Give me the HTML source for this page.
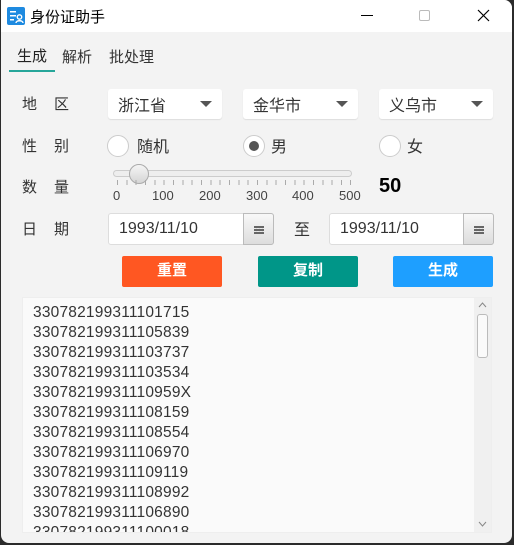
<!DOCTYPE html><html><head><meta charset="utf-8"><style>
*{margin:0;padding:0;box-sizing:border-box}
body{width:514px;height:545px;background:#2b2b2b;font-family:"Liberation Sans","Noto Sans CJK SC",sans-serif;position:relative;overflow:hidden;color:#333}
.win{position:absolute;left:1px;top:0;width:511px;height:543px;background:#f3f3f3;border-radius:0 8px 8px 8px;overflow:hidden}
.tb{position:absolute;left:0;top:0;width:100%;height:32px;background:#fff}
.a{position:absolute;white-space:nowrap}
.combo{position:absolute;top:89px;height:30px;background:#fff;border-radius:3px;box-shadow:0 1px 1px #ddd;font-size:16px;padding:3px 0 0 10px}
.combo:after{content:"";position:absolute;right:10px;top:12px;border-left:6px solid transparent;border-right:6px solid transparent;border-top:6px solid #555}
.lbl{position:absolute;left:21px;font-size:15px;letter-spacing:17px;color:#333}
.radio{position:absolute;width:22px;height:22px;border-radius:50%;background:#fff;border:1px solid #ccc;top:135px}
.rt{position:absolute;top:133px;font-size:16px}
.date{position:absolute;top:213px;height:32px;background:#fff;border:1px solid #ddd;border-radius:3px;font-size:16px;padding:6px 0 0 10px}
.cal{position:absolute;right:-1px;top:-1px;width:31px;height:32px;border:1px solid #bbb;border-radius:0 3px 3px 0;background:linear-gradient(#f8f8f8,#ddd)}
.cal i{position:absolute;left:10px;top:12px;width:10px;height:8px;background:linear-gradient(#666 0 2px,transparent 2px 3px,#666 3px 5px,transparent 5px 6px,#666 6px),repeating-linear-gradient(90deg,transparent 0 2px,#ddd 2px 3px);background-blend-mode:normal}
.cal b{position:absolute;left:10px;top:12px;width:10px;height:8px;background:repeating-linear-gradient(90deg,transparent 0 2px,#eee 2px 3px)}
.btn{position:absolute;top:256px;height:31px;width:100px;color:#fff;font-size:15px;font-weight:bold;text-align:center;line-height:29px;border-radius:2px}
.ta{position:absolute;left:21px;top:297px;width:470px;height:236px;background:#fafafa;border:1px solid #eee;overflow:hidden}
.ta div{font-size:15.5px;line-height:20px;color:#333;padding-left:10px;padding-top:5px;letter-spacing:0.2px}
</style></head><body><div class="win">
<div class="tb">
<svg class="a" style="left:6px;top:7px" width="18" height="18"><rect width="18" height="18" rx="2" fill="#1e8ae0"/><rect x="3" y="4" width="6" height="1.5" fill="#fff"/><rect x="3" y="8" width="6" height="1.5" fill="#fff"/><rect x="3" y="12" width="4" height="1.5" fill="#fff"/><circle cx="12.5" cy="10" r="2.2" fill="none" stroke="#fff" stroke-width="1.4"/><path d="M9 16c0-3 7-3 7 0" fill="none" stroke="#fff" stroke-width="1.4"/></svg>
<div class="a" style="left:29px;top:6px;font-size:15px;color:#000">身份证助手</div>
<div class="a" style="left:360px;top:15px;width:12px;height:1px;background:#000"></div>
<div class="a" style="left:418px;top:10px;width:11px;height:11px;border:1px solid #bbb;border-radius:2px"></div>
<svg class="a" style="left:476px;top:9px" width="13" height="13"><path d="M1 1L12 12M12 1L1 12" stroke="#000" stroke-width="1.2"/></svg>
</div>
<div class="a" style="left:16px;top:45px;font-size:15px;color:#222">生成</div>
<div class="a" style="left:8px;top:70px;width:46px;height:2px;background:#26a69a"></div>
<div class="a" style="left:61px;top:46px;font-size:15px">解析</div>
<div class="a" style="left:108px;top:46px;font-size:15px">批处理</div>
<div class="lbl" style="top:93px">地区</div>
<div class="combo" style="left:107px;width:114px">浙江省</div>
<div class="combo" style="left:242px;width:115px">金华市</div>
<div class="combo" style="left:378px;width:114px">义乌市</div>
<div class="lbl" style="top:135px">性别</div>
<div class="radio" style="left:106px"></div><div class="rt" style="left:136px">随机</div>
<div class="radio" style="left:242px"><div style="position:absolute;left:5px;top:5px;width:10px;height:10px;border-radius:50%;background:#555"></div></div><div class="rt" style="left:270px">男</div>
<div class="radio" style="left:378px"></div><div class="rt" style="left:406px">女</div>
<div class="lbl" style="top:176px">数量</div>
<div class="a" style="left:112px;top:170px;width:239px;height:7px;border:1px solid #ccc;border-radius:4px;background:#eee"></div>
<div class="a" style="left:128px;top:164px;width:20px;height:20px;border-radius:50%;border:1px solid #aaa;background:linear-gradient(#f5f5f5,#d5d5d5)"></div>
<div class="a" style="left:116px;top:180px;width:234px;height:5px;background:repeating-linear-gradient(90deg,#aaa 0 1px,transparent 1px 9.33px)"></div>
<div class="a" style="left:112px;top:188px;font-size:13px;color:#444">0</div>
<div class="a" style="left:151px;top:188px;font-size:13px;color:#444">100</div>
<div class="a" style="left:198px;top:188px;font-size:13px;color:#444">200</div>
<div class="a" style="left:245px;top:188px;font-size:13px;color:#444">300</div>
<div class="a" style="left:291px;top:188px;font-size:13px;color:#444">400</div>
<div class="a" style="left:338px;top:188px;font-size:13px;color:#444">500</div>
<div class="a" style="left:378px;top:175px;font-size:20px;font-weight:bold;color:#000">50</div>
<div class="lbl" style="top:218px">日期</div>
<div class="date" style="left:107px;width:166px">1993/11/10<div class="cal"><i></i></div></div>
<div class="a" style="left:293px;top:216px;font-size:16px">至</div>
<div class="date" style="left:328px;width:165px">1993/11/10<div class="cal"><i></i></div></div>
<div class="btn" style="left:121px;background:#ff5722">重置</div>
<div class="btn" style="left:257px;background:#009688">复制</div>
<div class="btn" style="left:392px;background:#1e9fff">生成</div>
<div class="ta"><div>330782199311101715<br>330782199311105839<br>330782199311103737<br>330782199311103534<br>33078219931110959X<br>330782199311108159<br>330782199311108554<br>330782199311106970<br>330782199311109119<br>330782199311108992<br>330782199311106890<br>330782199311100018</div>
<div style="position:absolute;right:0;top:0;width:17px;height:236px;background:#f0f0f0;padding:0"></div>
<div style="position:absolute;right:3px;top:16px;width:11px;height:44px;border:1px solid #bbb;border-radius:3px;background:#fafafa;padding:0"></div>
<svg style="position:absolute;right:4px;top:4px" width="9" height="6"><path d="M1 5L4.5 1L8 5" fill="none" stroke="#888"/></svg>
<svg style="position:absolute;right:4px;bottom:5px" width="9" height="6"><path d="M1 1L4.5 5L8 1" fill="none" stroke="#888"/></svg>
</div>
</div></body></html>
